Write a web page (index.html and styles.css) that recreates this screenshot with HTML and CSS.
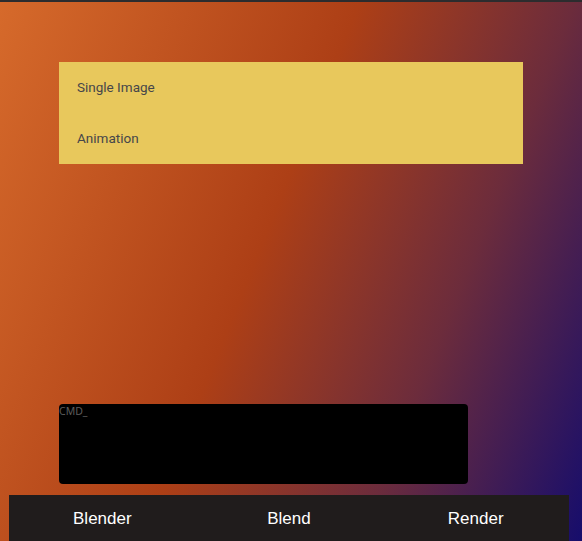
FILE: index.html
```html
<!DOCTYPE html>
<html>
<head>
<meta charset="utf-8">
<link rel="stylesheet" href="styles.css">
</head>
<body>
<div class="page">
  <div class="topbar"></div>
  <main class="main">
    <ul class="menu">
      <li class="menu-item">Single Image</li>
      <li class="menu-item">Animation</li>
    </ul>
    <div class="spacer"></div>
    <div class="terminal">CMD_</div>
  </main>
  <nav class="nav">
    <a class="nav-link">Blender</a>
    <a class="nav-link">Blend</a>
    <a class="nav-link">Render</a>
  </nav>
</div>
</body>
</html>
```

FILE: styles.css
```css
html, body {
  margin: 0;
  padding: 0;
  height: 100%;
}
body {
  overflow: hidden;
}
.page {
  height: 541px;
  display: flex;
  flex-direction: column;
  background: linear-gradient(112deg, #d66a2b 0%, #ad3f16 45%, #6c2c3c 72%, #160d6c 100%);
}
.topbar {
  height: 2px;
  background: #2c2c2e;
  flex: none;
}
.main {
  flex: 1;
  display: flex;
  flex-direction: column;
  padding: 60px 0 11px 59px;
}
.menu {
  list-style: none;
  margin: 0;
  padding: 0;
  width: 464px;
  background: #e8c85c;
}
.menu-item {
  height: 51px;
  box-sizing: border-box;
  padding: 0 0 2px 18px;
  display: flex;
  align-items: center;
  font-family: Roboto, "Liberation Sans", sans-serif;
  font-size: 13.5px;
  color: #46464a;
}
.spacer {
  flex: 1;
}
.terminal {
  width: 409px;
  height: 80px;
  background: #000;
  border-radius: 4px;
  font-family: "Noto Sans", "DejaVu Sans", sans-serif;
  font-size: 10.5px;
  line-height: 14px;
  color: #5c5c5c;
}
.nav {
  flex: none;
  height: 46px;
  margin: 0 13px 0 9px;
  background: #201c1c;
  display: grid;
  grid-template-columns: 1fr 1fr 1fr;
  align-items: center;
  justify-items: center;
}
.nav-link {
  font-family: "Liberation Sans", Arial, sans-serif;
  font-size: 17px;
  line-height: 20px;
  padding-top: 2px;
  color: #fff;
}
```
